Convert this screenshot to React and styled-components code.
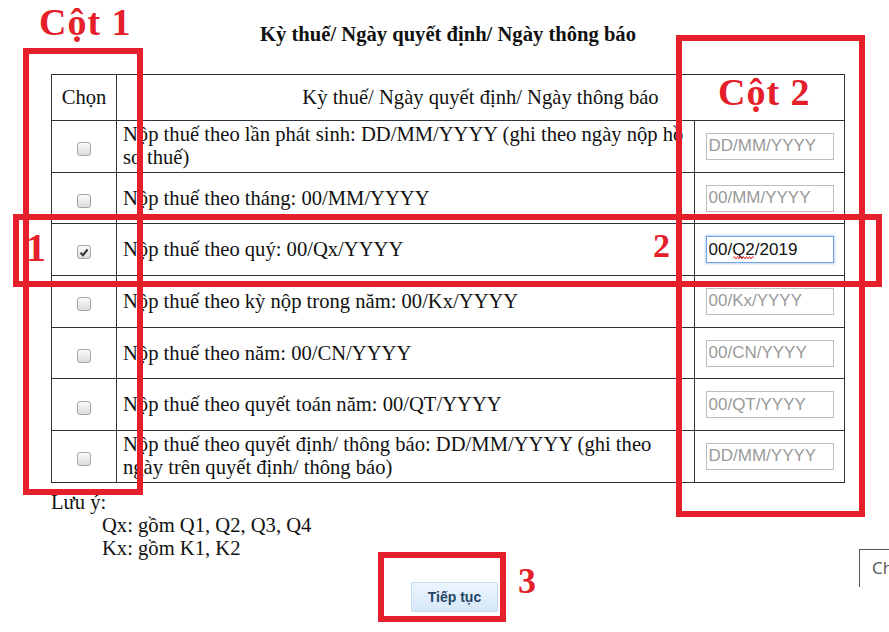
import React from 'react'
import styled, { createGlobalStyle } from 'styled-components'

const GlobalStyle = createGlobalStyle`
  html, body {
    margin: 0;
    padding: 0;
    background: #fff;
  }
  body {
    font-family: "Liberation Serif", "Times New Roman", serif;
    color: #111;
  }
`

const Page = styled.div`
  position: relative;
  width: 889px;
  height: 632px;
  overflow: hidden;
`

const Content = styled.div`
  margin-left: 51px;
  width: 794px;
`

const Title = styled.div`
  padding-top: 23px;
  font-weight: 700;
  font-size: 20.6px;
  line-height: 23px;
  text-align: center;
`

const Table = styled.table`
  margin-top: 28px;
  width: 794px;
  border-collapse: collapse;
  table-layout: fixed;
  font-size: 20.6px;
  line-height: 23px;
`

const Col = styled.col`
  width: ${p => p.$width || 'auto'};
`

const Head = styled.th`
  height: 45px;
  padding: 0;
  border: 1px solid #2d333a;
  font-weight: 400;
  text-align: center;
`

const Cell = styled.td`
  height: 50.7px;
  padding: ${p => (p.$center ? '0' : '0 1px 0 6px')};
  border: 1px solid #2d333a;
  vertical-align: middle;
  text-align: ${p => (p.$center ? 'center' : 'left')};
`

const Box = styled.span`
  display: inline-flex;
  align-items: center;
  justify-content: center;
  width: 14px;
  height: 14px;
  margin: 2px 1px 0 0;
  box-sizing: border-box;
  border: 1px solid #a6a6a6;
  border-radius: 3px;
  background: linear-gradient(#fbfbfb, #dcdcdc);
  vertical-align: middle;
`

const Field = styled.span`
  position: relative;
  display: inline-block;
  vertical-align: middle;
`

const Input = styled.input`
  display: block;
  width: 128px;
  height: 27px;
  box-sizing: border-box;
  padding: 0 2px;
  border: 1px solid ${p => (p.$focused ? '#6ea3e3' : '#bdbdbd')};
  box-shadow: ${p => (p.$focused ? '0 0 2px 1px rgba(110,163,227,.45)' : 'none')};
  outline: none;
  font-family: "Liberation Sans", Arial, sans-serif;
  font-size: 17px;
  color: #111;
  &::placeholder {
    color: #9a9a9a;
  }
`

const Squiggle = styled.svg`
  position: absolute;
  left: 27px;
  top: 20px;
`

const Notes = styled.div`
  margin-top: 8px;
  font-size: 20.6px;
  line-height: 23.3px;
`

const NoteLine = styled.div`
  padding-left: ${p => (p.$indent ? '51px' : '0')};
`

const Actions = styled.div`
  display: flex;
  padding: 21px 0 0 360px;
`

const Button = styled.button`
  width: 87px;
  height: 30px;
  padding: 0;
  border: 1px solid #c4dbf1;
  border-radius: 2px;
  background: linear-gradient(#edf5fd, #d5e7f8);
  font-family: "Liberation Sans", Arial, sans-serif;
  font-weight: 700;
  font-size: 14px;
  color: #274566;
`

const ChatTab = styled.div`
  position: absolute;
  left: 859px;
  top: 549px;
  width: 40px;
  height: 38px;
  box-sizing: border-box;
  border-left: 1px solid #555;
  border-top: 1px solid #555;
  padding: 6px 0 0 12px;
  font-family: "Open Sans", sans-serif;
  font-size: 17px;
  color: #555;
  white-space: nowrap;
`

const Frame = styled.div`
  position: absolute;
  box-sizing: border-box;
  border: 6px solid #e5202a;
  pointer-events: none;
`

const Mark = styled.div`
  position: absolute;
  font-family: "Liberation Serif", "Times New Roman", serif;
  font-weight: 700;
  font-size: ${p => p.$size}px;
  line-height: ${p => p.$size}px;
  color: #e5202a;
  white-space: nowrap;
  letter-spacing: ${p => p.$spacing || 0}px;
`

const rows = [
  { label: 'Nộp thuế theo lần phát sinh: DD/MM/YYYY (ghi theo ngày nộp hồ sơ thuế)', ph: 'DD/MM/YYYY' },
  { label: 'Nộp thuế theo tháng: 00/MM/YYYY', ph: '00/MM/YYYY' },
  { label: 'Nộp thuế theo quý: 00/Qx/YYYY', ph: '00/Qx/YYYY', checked: true, value: '00/Q2/2019' },
  { label: 'Nộp thuế theo kỳ nộp trong năm: 00/Kx/YYYY', ph: '00/Kx/YYYY' },
  { label: 'Nộp thuế theo năm: 00/CN/YYYY', ph: '00/CN/YYYY' },
  { label: 'Nộp thuế theo quyết toán năm: 00/QT/YYYY', ph: '00/QT/YYYY' },
  { label: 'Nộp thuế theo quyết định/ thông báo: DD/MM/YYYY (ghi theo ngày trên quyết định/ thông báo)', ph: 'DD/MM/YYYY' },
]

function Checkbox({ checked }) {
  return (
    <Box>
      {checked && (
        <svg width="10" height="9" viewBox="0 0 10 9">
          <path d="M1.5 4.8 L4 7.2 L8.6 1.5" fill="none" stroke="#333" strokeWidth="2" />
        </svg>
      )}
    </Box>
  )
}

export default function App() {
  return (
    <Page>
      <GlobalStyle />
      <Content>
        <Title>Kỳ thuế/ Ngày quyết định/ Ngày thông báo</Title>
        <Table>
          <colgroup>
            <Col $width="65px" />
            <Col />
            <Col $width="150px" />
          </colgroup>
          <thead>
            <tr>
              <Head>Chọn</Head>
              <Head colSpan={2}>Kỳ thuế/ Ngày quyết định/ Ngày thông báo</Head>
            </tr>
          </thead>
          <tbody>
            {rows.map(r => (
              <tr key={r.ph + r.label}>
                <Cell $center>
                  <Checkbox checked={r.checked} />
                </Cell>
                <Cell>{r.label}</Cell>
                <Cell $center>
                  <Field>
                    <Input
                      placeholder={r.ph}
                      defaultValue={r.value}
                      $focused={!!r.value}
                      spellCheck={false}
                      readOnly
                    />
                    {r.value && (
                      <Squiggle width="21" height="4" viewBox="0 0 21 4">
                        <path d="M0 2 L1.5 0.5 L3 3 L4.5 0.5 L6 3 L7.5 0.5 L9 3 L10.5 0.5 L12 3 L13.5 0.5 L15 3 L16.5 0.5 L18 3 L19.5 0.5 L21 2" fill="none" stroke="#e0383e" strokeWidth="1" />
                      </Squiggle>
                    )}
                  </Field>
                </Cell>
              </tr>
            ))}
          </tbody>
        </Table>
        <Notes>
          <NoteLine>Lưu ý:</NoteLine>
          <NoteLine $indent>Qx: gồm Q1, Q2, Q3, Q4</NoteLine>
          <NoteLine $indent>Kx: gồm K1, K2</NoteLine>
        </Notes>
        <Actions>
          <Button>Tiếp tục</Button>
        </Actions>
      </Content>

      <ChatTab>Ch</ChatTab>

      <Frame style={{ left: 23, top: 48, width: 120, height: 447 }} />
      <Frame style={{ left: 676, top: 35, width: 189, height: 482 }} />
      <Frame style={{ left: 13, top: 214, width: 869, height: 73 }} />
      <Frame style={{ left: 378, top: 552, width: 128, height: 70 }} />

      <Mark $size={38} $spacing={1} style={{ left: 39, top: 3 }}>Cột 1</Mark>
      <Mark $size={38} $spacing={1} style={{ left: 718, top: 73 }}>Cột 2</Mark>
      <Mark $size={40} style={{ left: 26, top: 228 }}>1</Mark>
      <Mark $size={34} style={{ left: 653, top: 229 }}>2</Mark>
      <Mark $size={36} style={{ left: 518, top: 563 }}>3</Mark>
    </Page>
  )
}
